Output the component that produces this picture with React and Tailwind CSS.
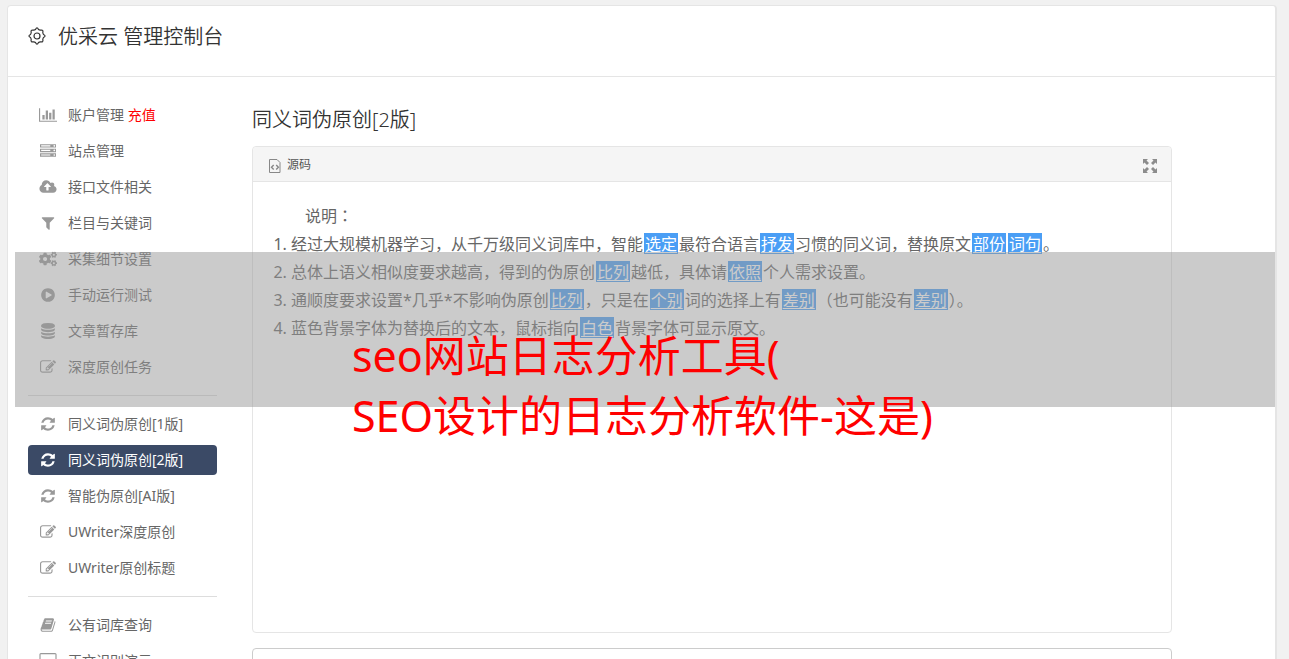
import { FaCogs } from "react-icons/fa";

const paths = {
  chart: ["0 0 2048 1792", "M640 896v512h-256v-512h256zm384-512v1024h-256v-1024h256zm1024 1152v128h-2048v-1536h128v1408h1920zm-640-896v768h-256v-768h256zm384-384v1152h-256v-1152h256z"],
  server: ["0 0 1792 1792", "M128 1408h1024v-128h-1024v128zm0-512h1024v-128h-1024v128zm1568 448q0-40-28-68t-68-28-68 28-28 68 28 68 68 28 68-28 28-68zm-1568-960h1024v-128h-1024v128zm1568 448q0-40-28-68t-68-28-68 28-28 68 28 68 68 28 68-28 28-68zm0-512q0-40-28-68t-68-28-68 28-28 68 28 68 68 28 68-28 28-68zm96 832v384h-1792v-384h1792zm0-512v384h-1792v-384h1792zm0-512v384h-1792v-384h1792z"],
  upload: ["-64 0 1920 1792", "M1216 864q0-14-9-23l-352-352q-9-9-23-9t-23 9l-351 351q-10 12-10 24 0 14 9 23t23 9h224v352q0 13 9.5 22.5t22.5 9.5h192q13 0 22.5-9.5t9.5-22.5v-352h224q13 0 22.5-9.5t9.5-22.5zm640 288q0 159-112.5 271.5t-271.5 112.5h-1088q-185 0-316.5-131.5t-131.5-316.5q0-130 70-240t188-165q-2-30-2-43 0-212 150-362t362-150q156 0 285.5 87t188.5 231q71-62 166-62 106 0 181 75t75 181q0 76-41 138 130 31 213.5 135.5t83.5 238.5z"],
  filter: ["0 0 1792 1792", "M1595 295q17 41-14 70l-493 493v742q0 42-39 59-13 5-25 5-27 0-45-19l-256-256q-19-19-19-45v-486l-493-493q-31-29-14-70 17-39 59-39h1280q42 0 59 39z"],
  play: ["0 0 1792 1792", "M896 128q209 0 385.5 103t279.5 279.5 103 385.5-103 385.5-279.5 279.5-385.5 103-385.5-103-279.5-279.5-103-385.5 103-385.5 279.5-279.5 385.5-103zm384 823q32-18 32-55t-32-55l-544-320q-31-19-64-1-32 19-32 56v640q0 37 32 56 16 8 32 8 17 0 32-9z"],
  database: ["0 0 1792 1792", "M896 768q237 0 443-43t325-127v170q0 69-103 128t-280 93.5-385 34.5-385-34.5-280-93.5-103-128v-170q119 84 325 127t443 43zm0 768q237 0 443-43t325-127v170q0 69-103 128t-280 93.5-385 34.5-385-34.5-280-93.5-103-128v-170q119 84 325 127t443 43zm0-384q237 0 443-43t325-127v170q0 69-103 128t-280 93.5-385 34.5-385-34.5-280-93.5-103-128v-170q119 84 325 127t443 43zm0-1152q208 0 385 34.5t280 93.5 103 128v128q0 69-103 128t-280 93.5-385 34.5-385-34.5-280-93.5-103-128v-128q0-69 103-128t280-93.5 385-34.5z"],
  edit: ["0 0 1792 1792", "M888 1184l116-116-152-152-116 116v56h96v96h56zm440-720q-16-16-33 1l-350 350q-17 17-1 33t33-1l350-350q17-17 1-33zm80 594v190q0 119-84.5 203.5t-203.5 84.5h-832q-119 0-203.5-84.5t-84.5-203.5v-832q0-119 84.5-203.5t203.5-84.5h832q63 0 117 25 15 7 18 23 3 17-9 29l-49 49q-14 14-32 8-23-6-45-6h-832q-66 0-113 47t-47 113v832q0 66 47 113t113 47h832q66 0 113-47t47-113v-126q0-13 9-22l64-64q15-15 35-7t20 29zm-96-738l288 288-672 672h-288v-288zm444 132l-92 92-288-288 92-92q28-28 68-28t68 28l152 152q28 28 28 68t-28 68z"],
  refresh: ["0 0 1792 1792", "M1639 1056q0 5-1 7-64 268-268 434.5t-478 166.5q-146 0-282.5-55t-243.5-157l-129 129q-19 19-45 19t-45-19-19-45v-448q0-26 19-45t45-19h448q26 0 45 19t19 45-19 45l-137 137q71 66 161 102t187 36q134 0 250-65t186-179q11-17 53-117 8-23 30-23h192q13 0 22.5 9.5t9.5 22.5zm25-800v448q0 26-19 45t-45 19h-448q-26 0-45-19t-19-45 19-45l138-138q-148-137-349-137-134 0-250 65t-186 179q-11 17-53 117-8 23-30 23h-199q-13 0-22.5-9.5t-9.5-22.5v-7q65-268 270-434.5t480-166.5q146 0 284 55.5t245 156.5l130-129q19-19 45-19t45 19 19 45z"],
  book: ["0 0 1792 1792", "M1703 478q40 57 18 129l-275 906q-19 64-76.5 107.5t-122.5 43.5h-923q-77 0-148.5-53.5t-99.5-131.5q-24-67-2-127 0-4 3-27t4-37q1-8-3-21.5t-3-19.5q2-11 8-21t16.5-23.5 16.5-23.5q23-38 45-91.5t30-91.5q3-10 .5-30t-.5-28q3-11 17-28t17-23q21-36 42-92t25-90q1-9-2.5-32t.5-28q4-13 22-30.5t22-22.5q19-26 42.5-84.5t27.5-96.5q1-8-3-25.5t-2-26.5q2-8 9-18t18-23 17-21q8-12 16.5-30.5t15-35 16-36 19.5-32 26.5-23.5 36-11.5 47.5 5.5l-1 3q38-9 51-9h761q74 0 114 56t18 130l-274 906q-36 119-71.5 153.5t-128.5 34.5h-869q-27 0-38 15-11 16-1 43 24 70 144 70h923q29 0 56-15.5t35-41.5l300-987q7-22 5-57 38 15 59 43zm-1064 2q-4 13 2 22.5t20 9.5h608q13 0 25.5-9.5t16.5-22.5l21-64q4-13-2-22.5t-20-9.5h-608q-13 0-25.5 9.5t-16.5 22.5zm-83 256q-4 13 2 22.5t20 9.5h608q13 0 25.5-9.5t16.5-22.5l21-64q4-13-2-22.5t-20-9.5h-608q-13 0-25.5 9.5t-16.5 22.5z"],
  desktop: ["0 0 1920 1792", "M1792 992v-832q0-13-9.5-22.5t-22.5-9.5h-1600q-13 0-22.5 9.5t-9.5 22.5v832q0 13 9.5 22.5t22.5 9.5h1600q13 0 22.5-9.5t9.5-22.5zm128-832v1088q0 66-47 113t-113 47h-544q0 37 16 77.5t32 71 16 43.5q0 26-19 45t-45 19h-512q-26 0-45-19t-19-45q0-14 16-44t32-70 16-78h-544q-66 0-113-47t-47-113v-1088q0-66 47-113t113-47h1600q66 0 113 47t47 113z"],
};

const groups = [
  [
    ["chart", "账户管理", "充值"],
    ["server", "站点管理"],
    ["upload", "接口文件相关"],
    ["filter", "栏目与关键词"],
    ["cogs", "采集细节设置"],
    ["play", "手动运行测试"],
    ["database", "文章暂存库"],
    ["edit", "深度原创任务"],
  ],
  [
    ["refresh", "同义词伪原创[1版]"],
    ["refresh", "同义词伪原创[2版]"],
    ["refresh", "智能伪原创[AI版]"],
    ["edit", "UWriter深度原创"],
    ["edit", "UWriter原创标题"],
  ],
  [
    ["book", "公有词库查询"],
    ["desktop", "正文识别演示"],
  ],
];

function NavIcon({ name }) {
  if (name === "cogs") return <FaCogs className="h-[18px] w-[18px]" />;
  const [box, d] = paths[name];
  return (
    <svg viewBox={box} className="h-4 w-[18px]" fill="currentColor" aria-hidden="true">
      <path d={d} />
    </svg>
  );
}

function NavItem({ icon, label, extra }) {
  const active = label === "同义词伪原创[2版]";
  return (
    <li>
      <a
        href="#"
        aria-current={active ? "page" : undefined}
        className={
          active
            ? "flex h-[30px] items-center rounded bg-[#3b4a66] pl-[11px] text-white"
            : "flex h-[30px] items-center rounded pl-[11px] text-[#666]"
        }
      >
        <span className={active ? "mr-[11px] text-white" : "mr-[11px] text-[#999]"}>
          <NavIcon name={icon} />
        </span>
        <span>
          {label}
          {extra && <span className="text-[#f00]"> {extra}</span>}
        </span>
      </a>
    </li>
  );
}

function Swap({ children }) {
  return (
    <u className="mx-px inline-block h-[21px] bg-[#4a9ef5] px-px align-baseline leading-[22px] text-white underline underline-offset-2">
      {children}
    </u>
  );
}

function GearIcon() {
  return (
    <svg viewBox="0 0 18 18" className="h-[18px] w-[18px]" fill="none" stroke="#333" strokeWidth="1.2" strokeLinejoin="round" aria-hidden="true">
      <path d="M7.500 2.500Q9-.600 10.500 2.500Q11.200 3 12.500 3.200Q15.600 2.400 14.800 5.500Q15 6.800 15.500 7.500Q18.600 9 15.500 10.500Q15 11.200 14.800 12.500Q15.600 15.600 12.500 14.800Q11.200 15 10.500 15.500Q9 18.600 7.500 15.500Q6.800 15 5.500 14.800Q2.400 15.600 3.200 12.500Q3 11.200 2.500 10.500Q-.600 9 2.500 7.500Q3 6.800 3.200 5.500Q2.400 2.400 5.500 3.200Q6.800 3 7.500 2.500z" />
      <circle cx="9" cy="9" r="3" />
    </svg>
  );
}

function SourceIcon() {
  return (
    <svg viewBox="0 0 12 14" className="mt-0.5 h-[14px] w-3" fill="none" stroke="#888" aria-hidden="true">
      <path d="M.5.5h7.500l3 3v10H.5z" />
      <path d="M4.700 6 2.500 8.300l2.200 2.200M7.200 6l2.200 2.300-2.200 2.200" strokeWidth="1.400" />
    </svg>
  );
}

function ExpandIcon() {
  return (
    <svg viewBox="0 0 14 14" className="h-[14px] w-[14px]" fill="#8c8c8c" aria-hidden="true">
      <path d="M0 0h5L3.500 1.500 6 4 4 6 1.500 3.500 0 5zM14 0v5l-1.500-1.500L10 6 8 4l2.500-2.500L9 0zM0 14V9l1.500 1.500L4 8l2 2-2.500 2.500L5 14zM14 14H9l1.500-1.500L8 10l2-2 2.500 2.500L14 9z" />
    </svg>
  );
}

export default function App() {
  return (
    <div className="relative h-screen overflow-hidden bg-[#f1f1f1] pt-[5px] pr-3 pl-[7px] font-['Noto_Sans','Noto_Sans_CJK_SC',sans-serif]">
      <div className="min-h-screen rounded-t border border-r-2 border-[#e5e5e5] bg-white">
        <header className="flex h-[71px] items-center border-b border-[#e5e5e5] pb-2.5 pl-5">
          <GearIcon />
          <h1 className="mt-px ml-3 text-xl leading-7 font-[350] text-[#333]">优采云 管理控制台</h1>
        </header>
        <div className="flex">
          <nav className="ml-5 w-[189px] shrink-0 pt-[23px] text-sm">
            {groups.map((group, i) => (
              <ul key={i} className={i ? "mt-[13px] flex flex-col gap-1.5 border-t border-[#ddd] pt-[13px]" : "flex flex-col gap-1.5"}>
                {group.map(([icon, label, extra]) => (
                  <NavItem key={label} icon={icon} label={label} extra={extra} />
                ))}
              </ul>
            ))}
          </nav>
          <main className="mr-[103px] ml-[35px] flex-1 pt-[29px]">
            <h2 className="text-xl leading-7 font-[350] text-[#333]">同义词伪原创[2版]</h2>
            <section className="mt-3 min-h-[487px] rounded border border-[#e5e5e5]">
              <div className="flex h-[35px] items-center justify-between rounded-t border-b border-[#e5e5e5] bg-[#f5f5f5] pt-px pr-[14px] pl-4">
                <button type="button" className="flex items-center gap-1.5 text-xs text-[#555]">
                  <SourceIcon />
                  源码
                </button>
                <button type="button" aria-label="全屏" className="pt-0.5">
                  <ExpandIcon />
                </button>
              </div>
              <div className="pt-[19px] pl-[38px] text-base leading-7 text-[#666]">
                <p className="pl-[14px]">
                  说明<span className="font-['Noto_Sans_CJK_TC',sans-serif]">：</span>
                </p>
                <ol className="list-decimal">
                  <li>
                    经过大规模机器学习，从千万级同义词库中，智能<Swap>选定</Swap>最符合语言<Swap>抒发</Swap>习惯的同义词，替换原文<Swap>部份</Swap><Swap>词句</Swap>。
                  </li>
                  <li>
                    总体上语义相似度要求越高，得到的伪原创<Swap>比列</Swap>越低，具体请<Swap>依照</Swap>个人需求设置。
                  </li>
                  <li>
                    通顺度要求设置*几乎*不影响伪原创<Swap>比列</Swap>，只是在<Swap>个别</Swap>词的选择上有<Swap>差别</Swap>（也可能没有<Swap>差别</Swap>）。
                  </li>
                  <li>
                    蓝色背景字体为替换后的文本，鼠标指向<Swap>白色</Swap>背景字体可显示原文。
                  </li>
                </ol>
              </div>
            </section>
            <section className="mt-[15px] h-20 rounded border border-[#ccc]" />
          </main>
        </div>
      </div>
      <div className="absolute top-[252px] right-[14px] left-[15px] h-[155px] bg-[#979797]/50" />
      <p className="absolute top-[326px] left-[352px] text-[43px] leading-[60px] whitespace-nowrap text-[#f00]">
        seo网站日志分析工具(
        <br />
        SEO设计的日志分析软件-这是)
      </p>
    </div>
  );
}
